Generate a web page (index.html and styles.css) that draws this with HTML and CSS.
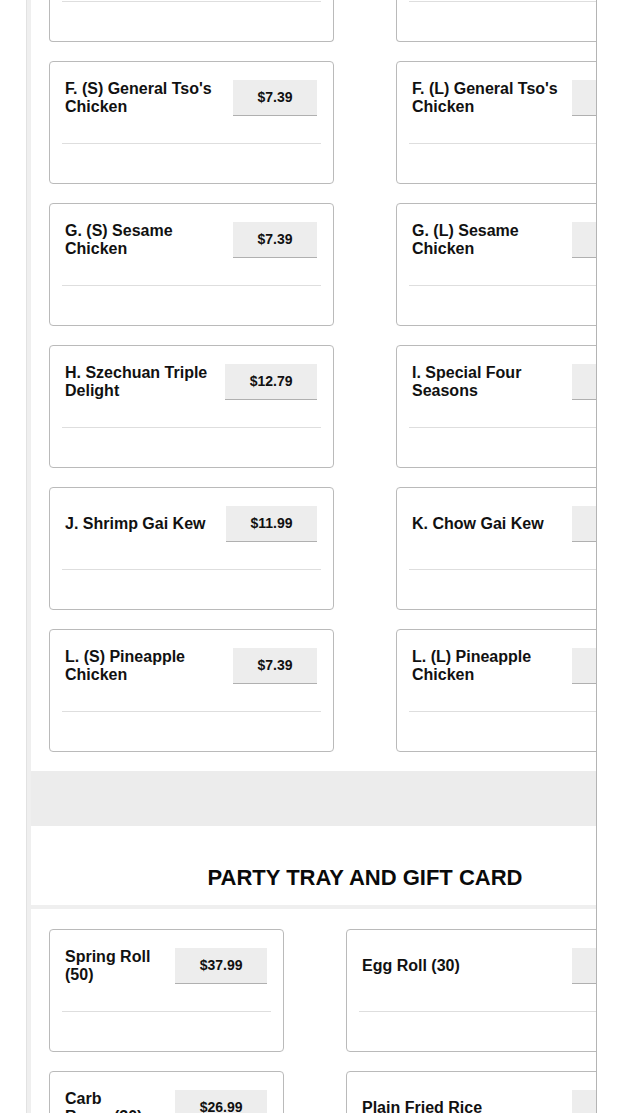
FILE: index.html
```html
<!DOCTYPE html>
<html lang="en">
<head>
<meta charset="utf-8">
<title>Menu</title>
<link rel="stylesheet" href="styles.css">
</head>
<body>
<div class="page">
  <div class="frame">
    <section class="items">
      <div class="grid grid--wide">
        <div class="card card--tail"><div class="card-rule"></div></div>
        <div class="card card--tail"><div class="card-rule"></div></div>

        <div class="card">
          <div class="card-head"><span class="name">F. (S) General Tso's Chicken</span><span class="price">$7.39</span></div>
          <div class="card-rule"></div>
        </div>
        <div class="card">
          <div class="card-head"><span class="name">F. (L) General Tso's Chicken</span><span class="price">$10.99</span></div>
          <div class="card-rule"></div>
        </div>

        <div class="card">
          <div class="card-head"><span class="name">G. (S) Sesame Chicken</span><span class="price">$7.39</span></div>
          <div class="card-rule"></div>
        </div>
        <div class="card">
          <div class="card-head"><span class="name">G. (L) Sesame Chicken</span><span class="price">$10.99</span></div>
          <div class="card-rule"></div>
        </div>

        <div class="card">
          <div class="card-head"><span class="name">H. Szechuan Triple Delight</span><span class="price">$12.79</span></div>
          <div class="card-rule"></div>
        </div>
        <div class="card">
          <div class="card-head"><span class="name">I. Special Four Seasons</span><span class="price">$12.79</span></div>
          <div class="card-rule"></div>
        </div>

        <div class="card">
          <div class="card-head"><span class="name">J. Shrimp Gai Kew</span><span class="price">$11.99</span></div>
          <div class="card-rule"></div>
        </div>
        <div class="card">
          <div class="card-head"><span class="name">K. Chow Gai Kew</span><span class="price">$10.99</span></div>
          <div class="card-rule"></div>
        </div>

        <div class="card">
          <div class="card-head"><span class="name">L. (S) Pineapple Chicken</span><span class="price">$7.39</span></div>
          <div class="card-rule"></div>
        </div>
        <div class="card">
          <div class="card-head"><span class="name">L. (L) Pineapple Chicken</span><span class="price">$10.99</span></div>
          <div class="card-rule"></div>
        </div>
      </div>
    </section>

    <div class="band"></div>

    <section class="title-block">
      <h2 class="title">PARTY TRAY AND GIFT CARD</h2>
    </section>

    <section class="items items--ruled">
      <div class="grid grid--narrow">
        <div class="card">
          <div class="card-head"><span class="name">Spring Roll (50)</span><span class="price">$37.99</span></div>
          <div class="card-rule"></div>
        </div>
        <div class="card">
          <div class="card-head"><span class="name">Egg Roll (30)</span><span class="price">$26.99</span></div>
          <div class="card-rule"></div>
        </div>
        <div class="card">
          <div class="card-head"><span class="name">Carb Range(30)</span><span class="price">$26.99</span></div>
          <div class="card-rule"></div>
        </div>
        <div class="card">
          <div class="card-head"><span class="name">Plain Fried Rice</span><span class="price">$26.99</span></div>
          <div class="card-rule"></div>
        </div>
      </div>
    </section>
  </div>
</div>
</body>
</html>
```

FILE: styles.css
```css
html, body {
  margin: 0;
  padding: 0;
  background: #ffffff;
}

body {
  font-family: "Liberation Sans", Arial, Helvetica, sans-serif;
  color: #111;
  overflow: hidden;
}

.page {
  margin-left: 26px;
  width: 569px;
  border-left: 1px solid #e2e2e2;
  border-right: 1px solid #b4b4b4;
  overflow: hidden;
}

.frame {
  width: 668px;
  border-left: 4px solid #efefef;
}

.items {
  padding: 0 18px 19px 18px;
  background: #fff;
}

.items--ruled {
  border-top: 4px solid #efefef;
  padding-top: 20px;
}

.grid {
  display: grid;
  row-gap: 19px;
  column-gap: 62px;
}

.grid--wide {
  grid-template-columns: 285px 285px;
}

.grid--narrow {
  grid-template-columns: 235px 335px;
}

.card {
  border: 1px solid #bababa;
  border-radius: 4px;
  padding: 18px 12px 39px 12px;
  background: #fff;
}

.card--tail {
  border-top: 0;
  border-radius: 0 0 4px 4px;
  padding-top: 1px;
}

.card--tail .card-rule {
  margin-top: 0;
}

.card-head {
  display: flex;
  align-items: center;
  justify-content: space-between;
  gap: 8px;
  padding: 0 4px 0 3px;
  height: 36px;
}

.name {
  flex: 1 1 auto;
  font-size: 16px;
  line-height: 18px;
  font-weight: bold;
  color: #111;
}

.price {
  flex: 0 0 auto;
  box-sizing: border-box;
  height: 36px;
  line-height: 35px;
  padding: 0 24.5px;
  background: #ededed;
  border-bottom: 1px solid #b0b0b0;
  font-size: 14px;
  font-weight: bold;
  color: #111;
  text-align: center;
}

.card-rule {
  margin-top: 27px;
  height: 1px;
  background: #dedede;
}

.band {
  height: 55px;
  background: #ececec;
}

.title-block {
  padding: 39px 0 14px 0;
  background: #fff;
}

.title {
  margin: 0;
  font-size: 22px;
  line-height: 26px;
  font-weight: bold;
  text-align: center;
  color: #0a0a0a;
}
```
